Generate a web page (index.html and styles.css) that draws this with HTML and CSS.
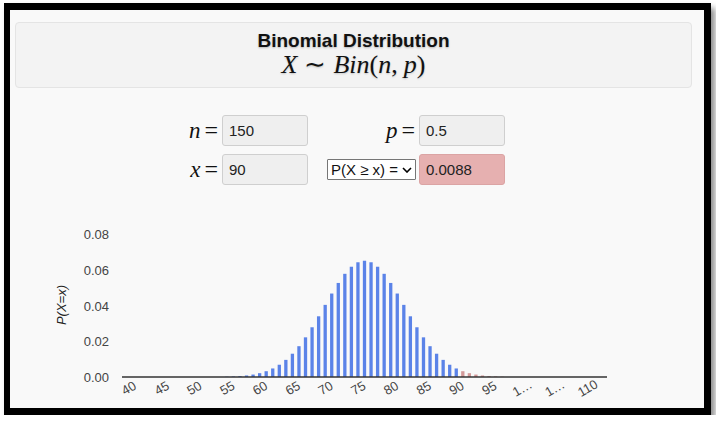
FILE: index.html
```html
<!DOCTYPE html>
<html>
<head>
<meta charset="utf-8">
<title>Binomial Distribution</title>
<link rel="stylesheet" href="styles.css">
</head>
<body>
<div class="frame">
  <div class="header">
    <div class="title">Binomial Distribution</div>
    <div class="formula"><span class="mi">X</span><span class="mo tilde">∼</span><span class="mi">Bin</span><span class="mo">(</span><span class="mi">n</span><span class="mo">,</span><span class="mi pv">p</span><span class="mo">)</span></div>
  </div>
  <div class="form">
    <div class="lbl"><span class="mi">n</span><span class="eq">=</span></div>
    <div class="field">150</div>
    <div class="lbl"><span class="mi">p</span><span class="eq">=</span></div>
    <div class="field">0.5</div>
    <div class="lbl"><span class="mi">x</span><span class="eq">=</span></div>
    <div class="field">90</div>
    <div class="lbl"><div class="select"><span>P(X ≥ x) =</span><svg class="chev" viewBox="0 0 10 6" width="10" height="6"><path d="M1 1 L5 5 L9 1" fill="none" stroke="#000" stroke-width="1.6"/></svg></div></div>
    <div class="field result">0.0088</div>
  </div>
  <svg class="chart" id="chart" viewBox="10 214 694 194" width="694" height="194"></svg>
</div>
<script src="script.js"></script>
</body>
</html>
```

FILE: styles.css
```css
html, body {
  margin: 0;
  padding: 0;
  background: #ffffff;
}
.frame {
  margin: 3px 0 0 4px;
  width: 707px;
  height: 412px;
  box-sizing: border-box;
  border-style: solid;
  border-color: #000;
  border-width: 7px 7px 7px 6px;
  background: #f9f9f9;
  box-shadow: 4px 5px 6px rgba(0,0,0,0.45);
  overflow: hidden;
  font-family: "Liberation Sans", Arial, sans-serif;
}
.header {
  margin: 12px 12px 0 5px;
  height: 66px;
  box-sizing: border-box;
  background: #f3f3f3;
  border: 1px solid #e4e4e4;
  border-radius: 4px;
  text-align: center;
  padding-top: 8px;
}
.title {
  font-weight: bold;
  font-size: 19px;
  line-height: 20px;
  color: #111;
  text-shadow: 0 1px 2px rgba(0,0,0,0.25);
}
.formula {
  font-family: "Liberation Serif", "Times New Roman", serif;
  font-size: 26px;
  line-height: 28px;
  color: #111;
  text-shadow: 0 1px 2px rgba(0,0,0,0.2);
}
.mi { font-style: italic; }
.mo { font-style: normal; }
.tilde { margin: 0 7px; }
.pv { margin-left: 6px; }
.form {
  display: grid;
  grid-template-columns: 60px 86px 103px 86px;
  grid-template-rows: 31px 31px;
  column-gap: 4px;
  row-gap: 8px;
  margin: 27px 0 0 148px;
  width: 347px;
}
.lbl {
  display: flex;
  align-items: center;
  justify-content: flex-end;
  font-family: "Liberation Serif", "Times New Roman", serif;
  font-size: 23px;
  color: #111;
}
.eq {
  margin-left: 4px;
  font-size: 24px;
}
.field {
  box-sizing: border-box;
  background: #efefef;
  border: 1px solid #cfcfcf;
  border-radius: 3px;
  font-size: 15px;
  color: #222;
  display: flex;
  align-items: center;
  padding-left: 6px;
}
.result {
  background: #e6b0b0;
  border-color: #dba4a4;
}
.select {
  box-sizing: border-box;
  height: 21px;
  width: 89px;
  margin-right: -1px;
  border: 1px solid #767676;
  background: #fff;
  font-family: "Liberation Sans", Arial, sans-serif;
  font-size: 15px;
  color: #111;
  display: flex;
  align-items: center;
  justify-content: space-between;
  padding: 0 3px 0 3px;
  border-radius: 1px;
}
.chev { display: block; }
.chart {
  display: block;
  margin-top: 29px;
}
.chart text {
  font-family: "Liberation Sans", Arial, sans-serif;
  font-size: 13px;
  fill: #444;
}
```

FILE: script.js
```js
(function () {
  var svg = document.getElementById('chart');
  var NS = 'http://www.w3.org/2000/svg';
  function el(name, attrs, text) {
    var e = document.createElementNS(NS, name);
    for (var k in attrs) e.setAttribute(k, attrs[k]);
    if (text !== undefined) e.textContent = text;
    svg.appendChild(e);
    return e;
  }
  var n = 150, p = 0.5;
  var lf = [0];
  for (var i = 1; i <= n; i++) lf[i] = lf[i - 1] + Math.log(i);
  function pmf(k) {
    return Math.exp(lf[n] - lf[k] - lf[n - k] + k * Math.log(p) + (n - k) * Math.log(1 - p));
  }
  var x0 = 122, x1 = 607, yBase = 377, yTop = 234;
  var dMin = 38, dMax = 112;
  var step = (x1 - x0) / (dMax - dMin);
  function bx(k) { return x0 + (k - dMin) * step; }
  var scale = (yBase - yTop) / 0.08;
  var ticks = ['0.08', '0.06', '0.04', '0.02', '0.00'];
  for (var t = 0; t < ticks.length; t++) {
    var v = parseFloat(ticks[t]);
    el('text', { x: 109, y: (yBase - v * scale + 5).toFixed(1), 'text-anchor': 'end' }, ticks[t]);
  }
  el('text', { x: 66, y: 305, 'text-anchor': 'middle', transform: 'rotate(-90 66 305)', 'font-style': 'italic', style: 'fill:#222' }, 'P(X=x)');
  var bw = 3.3;
  for (var k = 40; k <= 110; k++) {
    var h = pmf(k) * scale;
    var cx = bx(k);
    if (h < 0.2) continue;
    el('rect', { x: (cx - bw / 2).toFixed(2), y: (yBase - h).toFixed(2), width: bw, height: h.toFixed(2), fill: k >= 90 ? '#d49a9a' : '#5b83e8' });
  }
  el('line', { x1: x0, y1: yBase, x2: x1, y2: yBase, stroke: '#333', 'stroke-width': 1.3 });
  for (var k2 = 40; k2 <= 110; k2 += 5) {
    var lx = bx(k2) - 4;
    var ly = 392;
    var label = (k2 === 100 || k2 === 105) ? '1\u2026' : String(k2);
    el('text', { x: lx.toFixed(1), y: ly, 'text-anchor': 'middle', transform: 'rotate(-30 ' + lx.toFixed(1) + ' ' + ly + ')' }, label);
  }
})();
```
